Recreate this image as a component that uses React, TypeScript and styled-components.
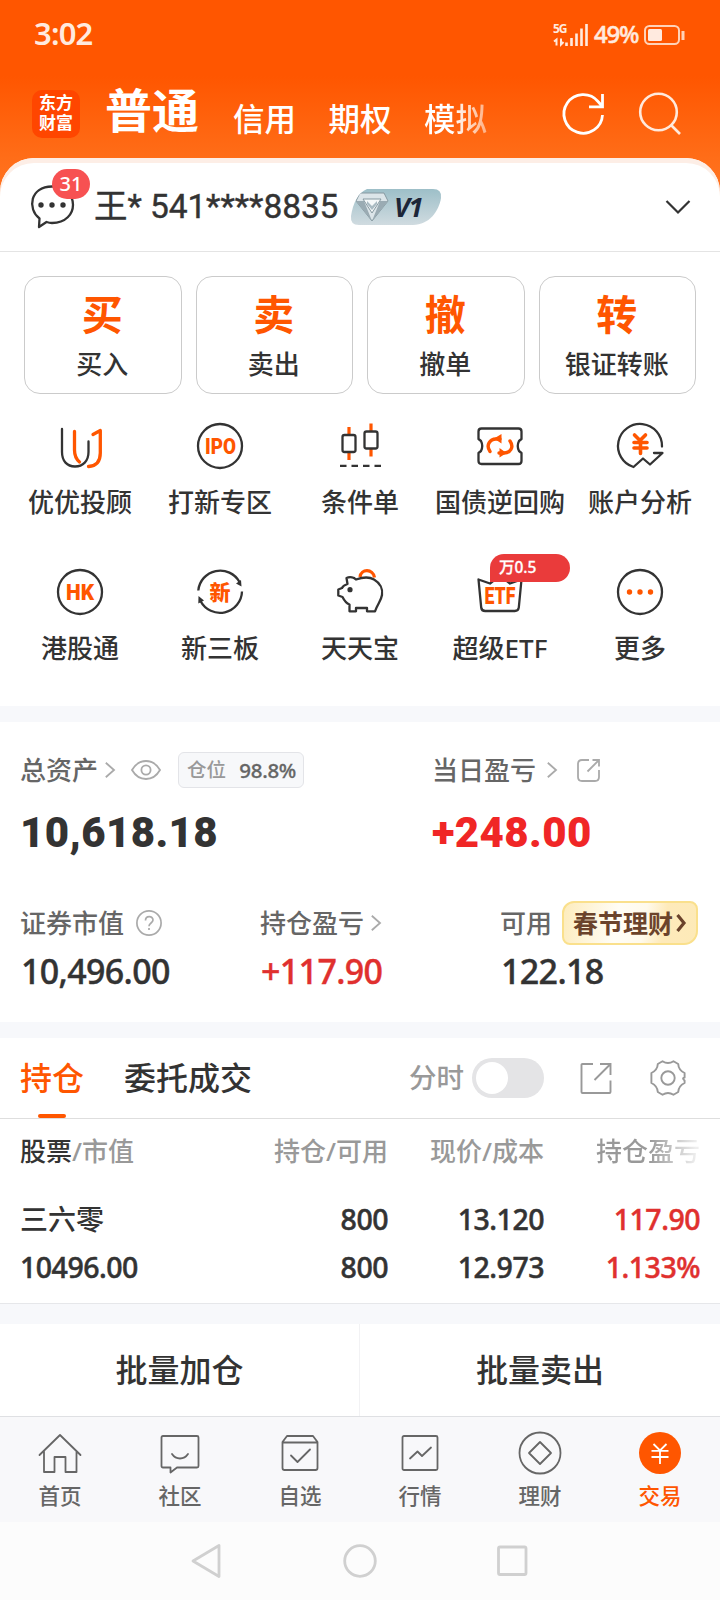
import React from "react";
import styled, { createGlobalStyle } from "styled-components";

const ORANGE = "#ff5600";
const INK = "#333333";
const RED = "#e0302e";
const FONT = `"Noto Sans", "Noto Sans CJK SC", sans-serif`;
const NARROW_FONT = `Roboto, "Noto Sans CJK SC", sans-serif`;

const GlobalStyle = createGlobalStyle`
  * { box-sizing: border-box; }
  body {
    margin: 0;
    background: #fff;
    color: ${INK};
    font-family: ${FONT};
    font-weight: 500;
  }
  svg { display: block; flex: none; overflow: visible; }
`;

const Screen = styled.main`
  width: 720px;
  height: 1600px;
  overflow: hidden;
  display: flex;
  flex-direction: column;
  background: #fff;
`;

/* ---------- header ---------- */

const Hero = styled.header`
  height: 192px;
  margin-bottom: -34px;
  flex: none;
  color: #fff;
  background: linear-gradient(#ff5600 0, #ff5600 76px, #ff6d18 158px, #ff7422 192px);
`;

const StatusBar = styled.div`
  height: 69px;
  padding: 0 35px 0 34px;
  display: flex;
  justify-content: space-between;
  align-items: center;
  color: #ffeadf;
`;

const Clock = styled.div`
  font-size: 31px;
  font-weight: 600;
  letter-spacing: -0.8px;
  line-height: 40px;
  padding-bottom: 4px;
`;

const StatusIcons = styled.div`
  display: flex;
  align-items: center;
`;

const Network = styled.div`
  width: 14px;
  height: 24px;
  font-size: 12px;
  font-weight: 700;
  letter-spacing: -1px;
  line-height: 12px;
`;

const BatteryText = styled.div`
  margin: 0 5px 0 6px;
  width: 45px;
  font-size: 24px;
  letter-spacing: -1.2px;
  line-height: 30px;
  padding-bottom: 1px;
  -webkit-text-stroke: 0.5px currentColor;
`;

const NavBar = styled.nav`
  height: 89px;
  padding: 0 39px 0 32px;
  display: flex;
  align-items: center;
`;

const Logo = styled.div`
  width: 48px;
  height: 48px;
  border-radius: 10px;
  background: #ff4600;
  display: grid;
  place-content: center;
  font-family: ${NARROW_FONT};
  font-size: 17px;
  font-weight: 700;
  line-height: 20px;
  text-align: center;
  padding-bottom: 1px;
`;

const MarketTabs = styled.div`
  flex: 1;
  display: flex;
  align-items: flex-start;
  margin-left: 25px;
  gap: 32.5px;
  white-space: nowrap;
`;

const MarketTab = styled.span<{ $active?: boolean; $fade?: boolean }>`
  font-size: ${(p) => (p.$active ? 47 : 31.5)}px;
  font-weight: ${(p) => (p.$active ? 600 : 500)};
  line-height: 56px;
  padding-top: ${(p) => (p.$active ? 1 : 10)}px;
  margin-right: ${(p) => (p.$active ? 1.5 : 0)}px;
  ${(p) =>
    p.$fade &&
    `background: linear-gradient(90deg, #fff 45%, #ffb083 100%);
     background-clip: text; -webkit-background-clip: text; color: transparent;`}
`;

const NavIcons = styled.div`
  display: flex;
  align-items: center;
  gap: 34px;
`;

/* ---------- account ---------- */

const Account = styled.section`
  position: relative;
  height: 94px;
  flex: none;
  padding: 5px 29px 0 30px;
  display: flex;
  align-items: center;
  background: #fff;
  border-radius: 34px 34px 0 0;
  border-bottom: 1px solid #e4e4e4;
  box-shadow: inset 0 5px 0 #fdeee6;
`;

const Messages = styled.div`
  position: relative;
  width: 64px;
  height: 44px;
`;

const Unread = styled.span`
  position: absolute;
  left: 22px;
  top: -16px;
  width: 38px;
  height: 30px;
  border-radius: 15px;
  background: #f75152;
  color: #fff;
  font-size: 20px;
  font-weight: 500;
  line-height: 30px;
  text-align: center;
`;

const AccountName = styled.div`
  width: 257px;
  font-family: ${NARROW_FONT};
  font-size: 33.5px;
  font-weight: 400;
  letter-spacing: -0.1px;
  line-height: 44px;
  white-space: nowrap;
  -webkit-text-stroke: 0.4px currentColor;
`;

const Level = styled.div`
  width: 90px;
  height: 36px;
  margin-right: auto;
  display: flex;
  align-items: center;
  background: linear-gradient(#9dbfc8, #d0dbe0);
  clip-path: path("M16 0H82Q91 0 90 9C88 22 78 36 62 36H8Q-1 36 0 27C2 14 7 4 16 0Z");
  padding-left: 4px;
  gap: 5px;
  color: #1d2638;
  font-size: 27px;
  font-style: italic;
  font-weight: 700;
  letter-spacing: -1.4px;
  line-height: 34px;
  padding-bottom: 1px;
`;

/* ---------- actions ---------- */

const Actions = styled.section`
  height: 454px;
  flex: none;
  padding-top: 24px;
`;

const TradeRow = styled.div`
  display: grid;
  grid-template-columns: repeat(4, 1fr);
  gap: 14px;
  padding: 0 24px;
`;

const TradeButton = styled.button`
  height: 118px;
  padding: 9px 1px 0 0;
  border: 1px solid #cbcbcb;
  border-radius: 16px;
  background: #fff;
  color: ${INK};
  font: 500 26px/36px ${FONT};
  display: flex;
  flex-direction: column;
  align-items: center;
`;

const TradeGlyph = styled.span`
  color: ${ORANGE};
  font-size: 41px;
  font-weight: 700;
  line-height: 57px;
  height: 60px;
`;

const ShortcutGrid = styled.div`
  display: grid;
  grid-template-columns: repeat(5, 140px);
  grid-auto-rows: 146px;
  padding: 28px 10px 0;
`;

const Shortcut = styled.div`
  position: relative;
  display: flex;
  flex-direction: column;
  align-items: center;
  gap: 14px;
  font-size: 26px;
  line-height: 36px;
  white-space: nowrap;
`;

const PromoTag = styled.span`
  position: absolute;
  left: 60px;
  top: -14px;
  width: 80px;
  height: 28px;
  padding-left: 9px;
  border-radius: 14px 14px 14px 0;
  background: #ea3b3b;
  color: #fff;
  font-size: 15.5px;
  font-weight: 500;
  line-height: 26px;
  -webkit-text-stroke: 0.3px currentColor;
`;

const IconText = styled.text<{ $size: number }>`
  fill: ${ORANGE};
  font-family: ${NARROW_FONT};
  font-size: ${(p) => p.$size}px;
  font-weight: 900;
  text-anchor: middle;
`;

const Gap = styled.div<{ $h: number }>`
  height: ${(p) => p.$h}px;
  flex: none;
  background: #f7f8fb;
`;

/* ---------- assets ---------- */

const Assets = styled.section`
  height: 300px;
  flex: none;
  padding: 29px 20px 0;
`;

const Totals = styled.div`
  display: grid;
  grid-template-columns: 412px 1fr;
`;

const Stats = styled.div`
  margin-top: 46px;
  display: grid;
  grid-template-columns: 240px 240px 1fr;
`;

const Label = styled.div`
  height: 38px;
  display: flex;
  align-items: center;
  font-size: 26px;
  line-height: 38px;
  color: #666;
  white-space: nowrap;
`;

const Total = styled.div<{ $red?: boolean }>`
  margin-top: 19px;
  font-family: ${NARROW_FONT};
  font-size: 42px;
  font-weight: 900;
  line-height: 50px;
  letter-spacing: 0.4px;
  color: ${(p) => (p.$red ? "#f02626" : INK)};
`;

const Stat = styled.div<{ $red?: boolean }>`
  margin-top: 9px;
  padding-left: 1px;
  font-size: 34px;
  line-height: 40px;
  letter-spacing: -0.65px;
  color: ${(p) => (p.$red ? RED : INK)};
  -webkit-text-stroke: 0.4px currentColor;
`;

const Spacer = styled.span<{ $w: number }>`
  width: ${(p) => p.$w}px;
  flex: none;
`;

const Position = styled.div`
  width: 126px;
  height: 36px;
  margin-left: 17px;
  padding: 0 7px 0 8px;
  display: flex;
  justify-content: space-between;
  align-items: center;
  border: 1px solid #e3e4e8;
  border-radius: 6px;
  background: #f7f8fa;
  font-size: 19.5px;
  line-height: 32px;
  color: #999;
  b { font-weight: 500; font-size: 20.5px; letter-spacing: -0.3px; color: #666; -webkit-text-stroke: 0.3px currentColor; }
`;

const Promo = styled.div`
  width: 136px;
  height: 44px;
  margin-left: 10px;
  padding-left: 9px;
  display: flex;
  align-items: center;
  gap: 3px;
  border: 2px solid #fae08c;
  border-radius: 12px 8px 14px 8px;
  background: linear-gradient(100deg, #fdecbd 0%, #fffdf6 40%, #fffaec 60%, #feeaba 75%, #fdeab8 100%);
  color: #6b432b;
  font-size: 25px;
  font-weight: 700;
  line-height: 40px;
`;

/* ---------- holdings ---------- */

const HoldingTabs = styled.div`
  height: 81px;
  flex: none;
  padding: 0 34px 0 20px;
  display: flex;
  align-items: center;
  border-bottom: 1px solid #dedede;
`;

const HoldingTab = styled.div<{ $active?: boolean }>`
  position: relative;
  margin-right: 40px;
  height: 80px;
  font-size: 32px;
  font-weight: 500;
  line-height: 80px;
  color: ${(p) => (p.$active ? ORANGE : INK)};
  ${(p) =>
    p.$active &&
    `&::after {
      content: ""; position: absolute; bottom: 0; left: 18px;
      width: 28px; height: 4px; border-radius: 2px; background: ${ORANGE};
    }`}
`;

const MinuteToggle = styled.div`
  margin-left: auto;
  display: flex;
  align-items: center;
  gap: 8px;
  font-size: 27.5px;
  line-height: 40px;
  color: #999;
`;

const Switch = styled.span`
  width: 72px;
  height: 40px;
  padding: 4px;
  border-radius: 20px;
  background: #e4e4e6;
  &::before {
    content: "";
    display: block;
    width: 32px;
    height: 32px;
    border-radius: 50%;
    background: #fff;
  }
`;

const Table = styled.div`
  height: 185px;
  flex: none;
  padding: 12px 20px 0 20px;
  border-bottom: 1px solid #e6e7ea;
`;

const TableRow = styled.div<{ $head?: boolean }>`
  display: grid;
  grid-template-columns: 211px 157px 156px 156px;
  height: ${(p) => (p.$head ? 66 : 48)}px;
  line-height: ${(p) => (p.$head ? 40 : 44)}px;
  font-size: ${(p) => (p.$head ? 26 : 28.5)}px;
  color: ${(p) => (p.$head ? "#999" : INK)};
  letter-spacing: ${(p) => (p.$head ? 0 : -0.5)}px;
  white-space: nowrap;
  ${(p) => !p.$head && `-webkit-text-stroke: 0.5px currentColor;`}
`;

const Cell = styled.span<{ $right?: boolean; $red?: boolean; $fade?: boolean; $cjk?: boolean }>`
  text-align: ${(p) => (p.$right ? "right" : "left")};
  ${(p) => p.$red && `color: ${RED};`}
  ${(p) => p.$cjk && `font-size: 28px; letter-spacing: 0; -webkit-text-stroke: 0;`}
  ${(p) =>
    p.$fade &&
    `background: linear-gradient(90deg, #999 0 105px, #eee 152px);
     background-clip: text; -webkit-background-clip: text; color: transparent;`}
`;

const Dark = styled.span`
  color: ${INK};
`;

const Batch = styled.div`
  height: 93px;
  flex: none;
  display: grid;
  grid-template-columns: 359px 361px;
  border-bottom: 1px solid #dfe0e3;
`;

const BatchButton = styled.div`
  text-align: center;
  font-size: 32px;
  font-weight: 500;
  line-height: 92px;
  & + & { border-left: 1px solid #f2f2f4; }
`;

/* ---------- bottom bars ---------- */

const TabBar = styled.nav`
  height: 105px;
  flex: none;
  display: grid;
  grid-template-columns: repeat(6, 120px);
  background: #f8f8fa;
`;

const TabItem = styled.div<{ $active?: boolean }>`
  padding-top: 12px;
  display: flex;
  flex-direction: column;
  align-items: center;
  gap: 4px;
  font-size: 21.5px;
  line-height: 30px;
  color: ${(p) => (p.$active ? ORANGE : "#666")};
`;

const SystemBar = styled.div`
  flex: 1;
  display: flex;
  justify-content: center;
  align-items: center;
  gap: 120px;
  background: #fcfcfc;
`;

/* ---------- icons ---------- */

const dark = { fill: "none", stroke: INK, strokeWidth: 2.3, strokeLinecap: "round", strokeLinejoin: "round" } as const;
const hot = { fill: "none", stroke: ORANGE, strokeWidth: 3.2, strokeLinecap: "round", strokeLinejoin: "round" } as const;
const gray = { fill: "none", stroke: "#666", strokeWidth: 1.8, strokeLinecap: "round", strokeLinejoin: "round" } as const;

const Box = ({ children }: { children: React.ReactNode }) => (
  <svg width="48" height="48" viewBox="0 0 48 48">{children}</svg>
);

const Chevron = ({ color = "#aaa" }: { color?: string }) => (
  <svg width="10" height="16" viewBox="0 0 10 16" fill="none" stroke={color} strokeWidth="1.8">
    <path d="M.8.8 9 8 .8 15.2" />
  </svg>
);

const shortcuts: { label: string; tag?: string; icon: React.ReactNode }[] = [
  {
    label: "优优投顾",
    icon: (
      <Box>
        <path {...dark} d="M6 7v23c0 9 5 14.500 13 14.500S32.500 39 32.500 30V19.500" />
        <path {...hot} strokeWidth="3.300" d="M18.500 9.500V28c0 6 1.500 9 5 12M37 12.500l7.300-4V31c0 8-4 13-11.800 13.500" />
      </Box>
    ),
  },
  {
    label: "打新专区",
    icon: (
      <Box>
        <circle {...dark} cx="24" cy="24" r="22" />
        <IconText $size={21.5} x="24.500" y="31.700" textLength="31" lengthAdjust="spacingAndGlyphs">IPO</IconText>
      </Box>
    ),
  },
  {
    label: "条件单",
    icon: (
      <Box>
        <path {...hot} strokeLinecap="butt" d="M13 5v8M13 30v8M35 1.500v8M35 26.500v8" />
        <rect {...dark} x="6.500" y="13" width="13" height="17" rx="2" />
        <rect {...dark} x="28.500" y="9.500" width="13" height="17" rx="2" />
        <path {...dark} strokeLinecap="butt" strokeDasharray="6.500 5" d="M4 43.800h41" />
      </Box>
    ),
  },
  {
    label: "国债逆回购",
    icon: (
      <Box>
        <path {...dark} d="M5.500 6.500h37q3 0 3 3V17l-2.500 2q-2.500 5 0 10l2.500 2v8q0 3-3 3h-37q-3 0-3-3V31l2.500-2q2.500-5 0-10l-2.500-2V9.500q0-3 3-3Z" />
        <path {...hot} strokeWidth="3.400" d="M14 29.500c-4.500-6.500 0-12.500 6-12.500h4M34 19c4.500 6.500 0 12-6 12h-5" />
        <path fill={ORANGE} d="M18 16.500 25.500 12v9.500ZM30.500 31 23.500 35.500v-9.500Z" />
      </Box>
    ),
  },
  {
    label: "账户分析",
    icon: (
      <Box>
        <path {...dark} d="M46 24.500A22 22 0 1 0 17.500 45L27 36.500l7 6L46.500 31H38" />
        <path {...hot} strokeWidth="3.600" d="M18.500 13 24 18.500 29.500 13M18 20.500h13M18 26h13M24.500 20v11.500" />
      </Box>
    ),
  },
  {
    label: "港股通",
    icon: (
      <Box>
        <circle {...dark} cx="24" cy="24" r="22" />
        <IconText $size={22} x="24" y="31.800" textLength="28" lengthAdjust="spacingAndGlyphs">HK</IconText>
      </Box>
    ),
  },
  {
    label: "新三板",
    icon: (
      <Box>
        <path {...dark} strokeLinecap="butt" d="M2.300 22.500A22 22 0 0 1 43.500 14M46 23.500A22 22 0 0 1 4.500 33" />
        <path fill={INK} d="M40 15.500 45 12 45.500 18.500ZM2.300 35.500 2.500 28 8 32.500Z" />
        <IconText $size={21} x="24" y="31.500">新</IconText>
      </Box>
    ),
  },
  {
    label: "天天宝",
    icon: (
      <Box>
        <path {...hot} strokeLinecap="butt" d="M24 9c1-8.500 13-8.500 14.500.5" />
        <path {...dark} d="M11.500 16 10.500 10C14 8.500 18 9.500 20 11.500 27 9 33 8.500 38 11.500 44 15 47 21 46 27 45 33 42 35 39 43.300H31V40H20V43.300H13.500V36.500C9.500 35 8 32 6.500 29L2.300 27.500V21.500L6 20C7 17.500 8.500 17 11.500 16Z" />
        <circle cx="14" cy="21.700" r="2.600" fill={INK} />
      </Box>
    ),
  },
  {
    label: "超级ETF",
    tag: "万0.5",
    icon: (
      <Box>
        <path {...dark} d="M2.500 11.500 14 15.500l10-8 10 8 11.500-4L42.800 39.500q-.4 3.500-4 3.500H9.200Q5.600 43 5.200 39.500Z" />
        <IconText $size={23} x="24" y="36" textLength="31" lengthAdjust="spacingAndGlyphs">ETF</IconText>
      </Box>
    ),
  },
  {
    label: "更多",
    icon: (
      <Box>
        <circle {...dark} cx="24" cy="24" r="22" />
        <g fill={ORANGE}>
          <circle cx="13.500" cy="24" r="2.700" />
          <circle cx="24" cy="24" r="2.700" />
          <circle cx="34.500" cy="24" r="2.700" />
        </g>
      </Box>
    ),
  },
];

const tabItems: { label: string; active?: boolean; icon: React.ReactNode }[] = [
  {
    label: "首页",
    icon: (
      <g {...gray}>
        <path d="M1.500 26 22 6l20.500 20M6 22.500v20.500h10.500V28h11V43H38.500V22.500" />
      </g>
    ),
  },
  {
    label: "社区",
    icon: (
      <g {...gray}>
        <path d="M5 7h34q1.500 0 1.500 1.500v28.500q0 1.500-1.500 1.500H19l-6.500 5V38.500H5q-1.500 0-1.500-1.500V8.500Q3.500 7 5 7Z" />
        <path d="M14 25c4 6 12 6 16 0" />
      </g>
    ),
  },
  {
    label: "自选",
    icon: (
      <g {...gray}>
        <path d="M4.500 13 9 7h26l4.500 6v26q0 2-2 2h-31q-2 0-2-2ZM4.500 13.500h35M13 26.500l6.500 6.500L32 20.500" />
      </g>
    ),
  },
  {
    label: "行情",
    icon: (
      <g {...gray}>
        <rect x="4.500" y="7" width="35" height="34" rx="1.500" />
        <path d="M12 29.500l7.500-7 4.500 4.500L33 18.500" />
      </g>
    ),
  },
  {
    label: "理财",
    icon: (
      <g {...gray}>
        <circle cx="22" cy="24" r="20.500" />
        <path d="M22 13 33 24 22 35 11 24Z" />
      </g>
    ),
  },
  {
    label: "交易",
    active: true,
    icon: (
      <g>
        <circle cx="22" cy="24" r="21" fill={ORANGE} />
        <path stroke="#fff" strokeWidth="1.800" fill="none" d="M15.500 15 22 21.500 28.500 15M13.500 21.800h17M13.500 28h17M22 21.500V35" />
      </g>
    ),
  },
];

const trades = [
  ["买", "买入"],
  ["卖", "卖出"],
  ["撤", "撤单"],
  ["转", "银证转账"],
];

export default function App() {
  return (
    <Screen>
      <GlobalStyle />
      <Hero>
        <StatusBar>
          <Clock>3:02</Clock>
          <StatusIcons>
            <Network>5G</Network>
            <svg width="35" height="22" viewBox="0 0 35 22" style={{ marginLeft: -14 }} stroke="#ffeadf" strokeWidth="2.600">
              <path strokeWidth="2" d="M3.500 21.500v-6L1 17.500M8 14.500v6l2.500-2.500" fill="none" />
              <path d="M13.500 22v-3.500M18.500 22v-8M23.500 22V9.500M28.500 22V4.500M33.500 22V0" />
            </svg>
            <BatteryText>49%</BatteryText>
            <svg width="41" height="20" viewBox="0 0 41 20" fill="none" stroke="#ffd2b8" strokeWidth="2">
              <rect x="1" y="1" width="34" height="18" rx="4.500" />
              <rect x="4" y="4" width="14" height="12" rx="1.500" fill="#ffeadf" stroke="none" />
              <path d="M39 6v9" strokeWidth="3" />
            </svg>
          </StatusIcons>
        </StatusBar>
        <NavBar>
          <Logo>
            <span>东方</span>
            <span>财富</span>
          </Logo>
          <MarketTabs>
            <MarketTab $active>普通</MarketTab>
            <MarketTab>信用</MarketTab>
            <MarketTab>期权</MarketTab>
            <MarketTab $fade>模拟</MarketTab>
          </MarketTabs>
          <NavIcons>
            <svg width="42" height="42" viewBox="0 0 42 42" fill="none" stroke="#fff" strokeWidth="2.800">
              <path d="M39.500 22A19.300 19.300 0 1 1 35 8.500l4 4.500M39.500 1v12.800H26" />
            </svg>
            <svg width="42" height="42" viewBox="0 0 42 42" fill="none" stroke="#ffe9dc" strokeWidth="2.600">
              <circle cx="19.500" cy="19" r="18.300" />
              <path d="m32 32 9 9" />
            </svg>
          </NavIcons>
        </NavBar>
      </Hero>

      <Account>
        <Messages>
          <svg width="44" height="44" viewBox="0 0 44 44" {...dark}>
            <path d="M9.500 33.500C-3 24 0 1.500 22 1.500c28 0 28 36.500 0 36.500-2.500 0-4-.5-5.500-1L9 42Z" />
            <g fill={INK} stroke="none">
              <circle cx="11" cy="20" r="2.700" />
              <circle cx="22" cy="20" r="2.700" />
              <circle cx="33" cy="20" r="2.700" />
            </g>
          </svg>
          <Unread>31</Unread>
        </Messages>
        <AccountName>王* 541****8835</AccountName>
        <Level>
          <svg width="34" height="30" viewBox="0 0 34 30">
            <path fill="#dce5e9" stroke="#8799a1" d="M5 1h24l4 8-16 20L1 9Z" />
            <path fill="#9aabb3" d="M1 9h8l8 20ZM33 9h-8l-8 20Z" />
            <path fill="#f5f8f9" stroke="#8799a1" d="M8 7h18l-9 14Z" />
            <path fill="#a9bac2" d="m12 9 5 5 5-5v3l-5 6-5-6Z" />
          </svg>
          V1
        </Level>
        <svg width="26" height="14" viewBox="0 0 26 14" fill="none" stroke={INK} strokeWidth="2.200">
          <path d="M1.500 1 13 12.500 24.500 1" />
        </svg>
      </Account>

      <Actions>
        <TradeRow>
          {trades.map(([glyph, label]) => (
            <TradeButton key={label}>
              <TradeGlyph>{glyph}</TradeGlyph>
              {label}
            </TradeButton>
          ))}
        </TradeRow>
        <ShortcutGrid>
          {shortcuts.map((s) => (
            <Shortcut key={s.label}>
              {s.icon}
              {s.label}
              {s.tag && <PromoTag>{s.tag}</PromoTag>}
            </Shortcut>
          ))}
        </ShortcutGrid>
      </Actions>

      <Gap $h={16} />

      <Assets>
        <Totals>
          <div>
            <Label>
              总资产
              <Spacer $w={7} />
              <Chevron />
              <Spacer $w={16} />
              <svg width="30" height="20" viewBox="0 0 30 20" fill="none" stroke="#aaa" strokeWidth="1.800">
                <path d="M1 10C8-2 22-2 29 10 22 22 8 22 1 10Z" />
                <circle cx="15" cy="10" r="4.600" />
              </svg>
              <Position>
                仓位 <b>98.8%</b>
              </Position>
            </Label>
            <Total>10,618.18</Total>
          </div>
          <div>
            <Label>
              当日盈亏
              <Spacer $w={11} />
              <Chevron />
              <Spacer $w={20} />
              <svg width="23" height="23" viewBox="0 0 23 23" fill="none" stroke="#aaa" strokeWidth="1.800">
                <path d="M12 1H5Q1 1 1 5v13q0 4 4 4h13q4 0 4-4v-7M15.500 1H22v6.500M21.500 1.500l-11 11" />
              </svg>
            </Label>
            <Total $red>+248.00</Total>
          </div>
        </Totals>
        <Stats>
          <div>
            <Label>
              证券市值
              <Spacer $w={12} />
              <svg width="26" height="26" viewBox="0 0 26 26" fill="none" stroke="#aaa" strokeWidth="1.700">
                <circle cx="13" cy="13" r="12.100" />
                <path d="M9.500 10.500c0-5 7.500-5 7.500-.5 0 3-4 3-4 6.200M13 18v2" />
              </svg>
            </Label>
            <Stat>10,496.00</Stat>
          </div>
          <div>
            <Label>
              持仓盈亏
              <Spacer $w={7} />
              <Chevron />
            </Label>
            <Stat $red>+117.90</Stat>
          </div>
          <div>
            <Label>
              <span>可用</span>
              <Promo>
                春节理财
                <svg width="10" height="18" viewBox="0 0 10 18" fill="none" stroke="#6b432b" strokeWidth="3.200">
                  <path d="M1.500 1 8 9l-6.500 8" />
                </svg>
              </Promo>
            </Label>
            <Stat>122.18</Stat>
          </div>
        </Stats>
      </Assets>

      <Gap $h={16} />

      <HoldingTabs>
        <HoldingTab $active>持仓</HoldingTab>
        <HoldingTab>委托成交</HoldingTab>
        <MinuteToggle>
          分时
          <Switch />
        </MinuteToggle>
        <Spacer $w={36} />
        <svg width="32" height="32" viewBox="0 0 32 32" fill="none" stroke="#999" strokeWidth="1.900">
          <path d="M13 2H2.500q-1 0-1 1v27q0 1 1 1h27q1 0 1-1V18.500M20 2h10.500v11M30 2.500 14.500 18" />
        </svg>
        <Spacer $w={38} />
        <svg width="36" height="36" viewBox="0 0 36 36" fill="none" stroke="#999" strokeWidth="1.900" strokeLinejoin="round">
          <path d="M12.500 1.300Q18 4.800 23.500 1.300L28.200 4Q28.500 10 34.600 13V17.500Q31.500 18 34.600 20.500V23Q28.500 26 28.200 32L23.500 34.700Q18 31.200 12.500 34.700L7.800 32Q7.500 26 1.400 23V13Q7.500 10 7.800 4Z" />
          <circle cx="18" cy="18" r="6.700" />
        </svg>
      </HoldingTabs>

      <Table>
        <TableRow $head>
          <Cell>
            <Dark>股票</Dark>/市值
          </Cell>
          <Cell $right>持仓/可用</Cell>
          <Cell $right>现价/成本</Cell>
          <Cell $right $fade>持仓盈亏</Cell>
        </TableRow>
        <TableRow>
          <Cell $cjk>三六零</Cell>
          <Cell $right>800</Cell>
          <Cell $right>13.120</Cell>
          <Cell $right $red>117.90</Cell>
        </TableRow>
        <TableRow>
          <Cell>10496.00</Cell>
          <Cell $right>800</Cell>
          <Cell $right>12.973</Cell>
          <Cell $right $red>1.133%</Cell>
        </TableRow>
      </Table>

      <Gap $h={20} />

      <Batch>
        <BatchButton>批量加仓</BatchButton>
        <BatchButton>批量卖出</BatchButton>
      </Batch>

      <TabBar>
        {tabItems.map((t) => (
          <TabItem key={t.label} $active={t.active}>
            <svg width="44" height="48" viewBox="0 0 44 48">{t.icon}</svg>
            {t.label}
          </TabItem>
        ))}
      </TabBar>

      <SystemBar>
        <svg width="33" height="34" viewBox="0 0 33 34" fill="none" stroke="#d0d0d0" strokeWidth="2.800" strokeLinejoin="round">
          <path d="M28 1.500v31L2 17Z" />
        </svg>
        <svg width="33" height="34" viewBox="0 0 33 34" fill="none" stroke="#d0d0d0" strokeWidth="2.800">
          <circle cx="16" cy="17" r="15.300" />
        </svg>
        <svg width="33" height="34" viewBox="0 0 33 34" fill="none" stroke="#d0d0d0" strokeWidth="2.800">
          <rect x="1.500" y="3" width="27.500" height="27.500" rx="1.500" />
        </svg>
      </SystemBar>
    </Screen>
  );
}
